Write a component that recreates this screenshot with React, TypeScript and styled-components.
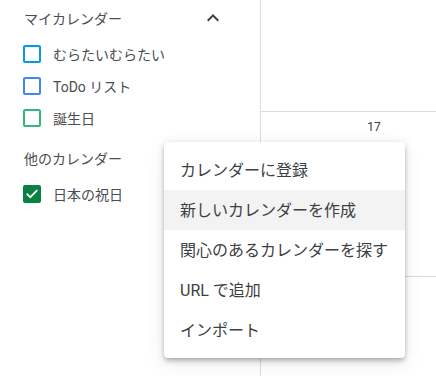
import styled, { createGlobalStyle } from "styled-components";

const GlobalStyle = createGlobalStyle`
  body {
    margin: 0;
    background: #fff;
    font-family: Roboto, "Noto Sans CJK JP", sans-serif;
    color: #3c4043;
  }
`;

const Page = styled.div`
  position: relative;
  display: flex;
  width: 436px;
  height: 376px;
  overflow: hidden;
`;

const Sidebar = styled.div`
  width: 260px;
  flex-shrink: 0;
`;

const SectionHeader = styled.div<{ $top?: number }>`
  display: flex;
  align-items: center;
  justify-content: space-between;
  height: 36px;
  margin-top: ${(p) => p.$top || 0}px;
  margin-bottom: 2px;
  padding: 0 35px 0 24px;
  font-size: 14px;
  color: #4a4d51;
`;

const Row = styled.div`
  display: flex;
  align-items: center;
  gap: 12px;
  height: 32px;
  padding-left: 23px;
  font-size: 14px;
  color: #4a4d51;
`;

const Box = styled.div<{ $color: string; $checked?: boolean }>`
  display: flex;
  align-items: center;
  justify-content: center;
  box-sizing: border-box;
  width: 18px;
  height: 18px;
  border: 2px solid ${(p) => p.$color};
  border-radius: 2px;
  background: ${(p) => (p.$checked ? p.$color : "transparent")};
`;

const Main = styled.div`
  flex: 1;
  border-left: 1px solid #dadce0;
  min-width: 0;
`;

const Cell = styled.div<{ $height: number }>`
  height: ${(p) => p.$height}px;
  border-bottom: 1px solid #dadce0;
  box-sizing: border-box;
`;

const DayCell = styled(Cell)`
  width: 226px;
  text-align: center;
  padding-top: 8px;
  font-size: 12px;
  color: #3c4043;
`;

const Menu = styled.div`
  position: absolute;
  left: 164px;
  top: 142px;
  width: 241px;
  padding: 8px 0;
  background: #fff;
  border-radius: 4px;
  box-shadow: 0 4px 5px 0 rgba(0, 0, 0, 0.12), 0 1px 10px 0 rgba(0, 0, 0, 0.1),
    0 2px 4px -1px rgba(0, 0, 0, 0.18), 0 8px 24px 0 rgba(0, 0, 0, 0.06);
`;

const MenuItem = styled.div<{ $active?: boolean }>`
  display: flex;
  align-items: center;
  box-sizing: border-box;
  height: 40px;
  padding: 0 16px 3px;
  font-size: 16px;
  color: #3c4043;
  background: ${(p) => (p.$active ? "#f3f3f3" : "transparent")};
`;

const Check = () => (
  <svg width="14" height="14" viewBox="0 0 24 24">
    <path
      d="M4 12.5l5 5L20 6.5"
      fill="none"
      stroke="#fff"
      strokeWidth="3"
      strokeLinecap="square"
    />
  </svg>
);

const Chevron = () => (
  <svg width="24" height="24" viewBox="0 0 24 24">
    <path d="M12 8l-6 6 1.41 1.41L12 10.83l4.59 4.58L18 14z" fill="#3c4043" />
  </svg>
);

const myCalendars = [
  { name: "むらたいむらたい", color: "#039be5" },
  { name: "ToDo リスト", color: "#4285f4" },
  { name: "誕生日", color: "#33b679" },
];

const menuItems = [
  "カレンダーに登録",
  "新しいカレンダーを作成",
  "関心のあるカレンダーを探す",
  "URL で追加",
  "インポート",
];

const App = () => {
  return (
    <>
      <GlobalStyle />
      <Page>
        <Sidebar>
          <SectionHeader>
            マイカレンダー
            <Chevron />
          </SectionHeader>
          {myCalendars.map((c) => (
            <Row key={c.name}>
              <Box $color={c.color} />
              {c.name}
            </Row>
          ))}
          <SectionHeader $top={6}>他のカレンダー</SectionHeader>
          <Row>
            <Box $color="#0b8043" $checked>
              <Check />
            </Box>
            日本の祝日
          </Row>
        </Sidebar>
        <Main>
          <Cell $height={112} />
          <DayCell $height={165}>17</DayCell>
        </Main>
        <Menu>
          {menuItems.map((m, i) => (
            <MenuItem key={m} $active={i === 1}>
              {m}
            </MenuItem>
          ))}
        </Menu>
      </Page>
    </>
  );
};

export default App;
